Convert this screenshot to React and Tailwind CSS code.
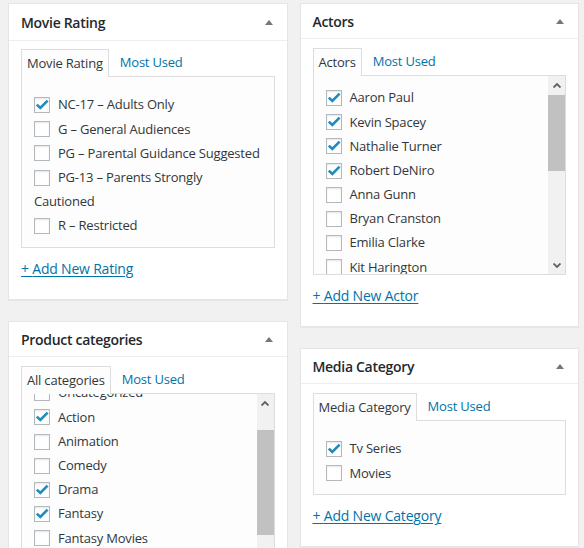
import React from 'react';

const font = { fontFamily: '"Open Sans", "Noto Sans", sans-serif' };

function Check({ checked }) {
  return (
    <span className="relative inline-block h-4 w-4 shrink-0 border border-[#b4b9be] bg-white shadow-[inset_0_1px_2px_rgba(0,0,0,0.1)]">
      {checked && (
        <svg viewBox="0 0 16 16" className="absolute -left-px -top-px h-4 w-4" fill="none">
          <path d="M2.8 7.6 L6.3 11 L13.6 3.6" stroke="#1e8cbe" strokeWidth="2.6" strokeLinejoin="miter" strokeLinecap="butt" />
        </svg>
      )}
    </span>
  );
}

function Row({ label, checked }) {
  return (
    <div className="flex h-[24.2px] items-center gap-2">
      <Check checked={checked} />
      <span>{label}</span>
    </div>
  );
}

function Box({ title, head, pad, children }) {
  return (
    <div className="border border-[#e5e5e5] bg-white shadow-[0_1px_1px_rgba(0,0,0,0.04)]">
      <div className={`flex items-center justify-between border-b border-[#eee] ${head}`}>
        <h2 className="pl-3 text-[14px] font-semibold tracking-[-0.3px] text-[#23282d]">{title}</h2>
        <span className="flex w-9 justify-center">
          <svg width="8" height="5" viewBox="0 0 8 5">
            <path d="M0 5 L4 0 L8 5 Z" fill="#72777c" />
          </svg>
        </span>
      </div>
      <div className={`px-3 ${pad}`}>{children}</div>
    </div>
  );
}

function Tabs({ first }) {
  return (
    <div className="flex h-[27px] items-start">
      <div className="relative z-10 flex h-[28px] items-center border border-b-0 border-[#ddd] bg-[#fdfdfd] px-[5px] text-[#32373c]">
        {first}
      </div>
      <div className="ml-[6px] flex h-[28px] items-center px-[5px] text-[#0073aa]">Most Used</div>
    </div>
  );
}

function Scrollbar({ thumbTop, thumbH }) {
  return (
    <div className="relative w-[17px] shrink-0 bg-[#f1f1f1]">
      <div className="flex h-[17px] items-center justify-center">
        <svg width="8" height="6" viewBox="0 0 8 6">
          <path d="M0.5 5.5 L4 2 L7.5 5.5" stroke="#606060" strokeWidth="1.8" fill="none" />
        </svg>
      </div>
      <div className="absolute left-0 w-full bg-[#c1c1c1]" style={{ top: thumbTop, height: thumbH }} />
      <div className="absolute bottom-0 left-0 flex h-[17px] w-full items-center justify-center">
        <svg width="8" height="6" viewBox="0 0 8 6">
          <path d="M0.5 0.5 L4 4 L7.5 0.5" stroke="#606060" strokeWidth="1.8" fill="none" />
        </svg>
      </div>
    </div>
  );
}

function AddLink({ children }) {
  return (
    <div className="mt-[11px] pb-[20px] leading-5">
      <a className="text-[14px] tracking-[-0.2px] text-[#0073aa] underline underline-offset-2">+ {children}</a>
    </div>
  );
}

const actors = [
  ['Aaron Paul', true],
  ['Kevin Spacey', true],
  ['Nathalie Turner', true],
  ['Robert DeNiro', true],
  ['Anna Gunn', false],
  ['Bryan Cranston', false],
  ['Emilia Clarke', false],
  ['Kit Harington', false],
];

const cats = [
  ['Uncategorized', false],
  ['Action', true],
  ['Animation', false],
  ['Comedy', false],
  ['Drama', true],
  ['Fantasy', true],
  ['Fantasy Movies', false],
];

export default function App() {
  return (
    <div className="h-[548px] overflow-hidden bg-[#f1f1f1] text-[13px] tracking-[-0.2px] text-[#32373c]" style={font}>
      <div className="flex gap-3 pl-2 pr-[5px] pt-[3px]">
        <div className="flex w-[280px] flex-col gap-[21px]">
          <Box title="Movie Rating" head="h-[37px]" pad="pt-[8px]">
            <Tabs first="Movie Rating" />
            <div className="border border-[#ddd] bg-[#fdfdfd] pb-[9px] pl-3 pt-[16px]">
              <Row label="NC-17 – Adults Only" checked />
              <Row label="G – General Audiences" />
              <Row label="PG – Parental Guidance Suggested" />
              <Row label="PG-13 – Parents Strongly" />
              <div className="flex h-[24.2px] items-center">Cautioned</div>
              <Row label="R – Restricted" />
            </div>
            <AddLink>Add New Rating</AddLink>
          </Box>
          <Box title="Product categories" head="h-[35px]" pad="pt-[9px]">
            <Tabs first="All categories" />
            <div className="flex h-[200px] border border-[#ddd] bg-[#fdfdfd]">
              <div className="flex-1 overflow-hidden pl-3">
                <div className="-mt-[13px]">
                  {cats.map(([l, c]) => (
                    <Row key={l} label={l} checked={c} />
                  ))}
                </div>
              </div>
              <Scrollbar thumbTop={36} thumbH={105} />
            </div>
          </Box>
        </div>
        <div className="flex w-[280px] flex-col gap-[21px]">
          <Box title="Actors" head="h-[35px]" pad="pt-[9px]">
            <Tabs first="Actors" />
            <div className="flex h-[200px] border border-[#ddd] bg-[#fdfdfd]">
              <div className="flex-1 overflow-hidden pl-3 pt-[10px]">
                {actors.map(([l, c]) => (
                  <Row key={l} label={l} checked={c} />
                ))}
              </div>
              <Scrollbar thumbTop={19} thumbH={76} />
            </div>
            <AddLink>Add New Actor</AddLink>
          </Box>
          <Box title="Media Category" head="h-[35px]" pad="pt-[9px]">
            <Tabs first="Media Category" />
            <div className="border border-[#ddd] bg-[#fdfdfd] pb-[9px] pl-3 pt-[16px]">
              <Row label="Tv Series" checked />
              <Row label="Movies" />
            </div>
            <AddLink>Add New Category</AddLink>
          </Box>
        </div>
      </div>
    </div>
  );
}
